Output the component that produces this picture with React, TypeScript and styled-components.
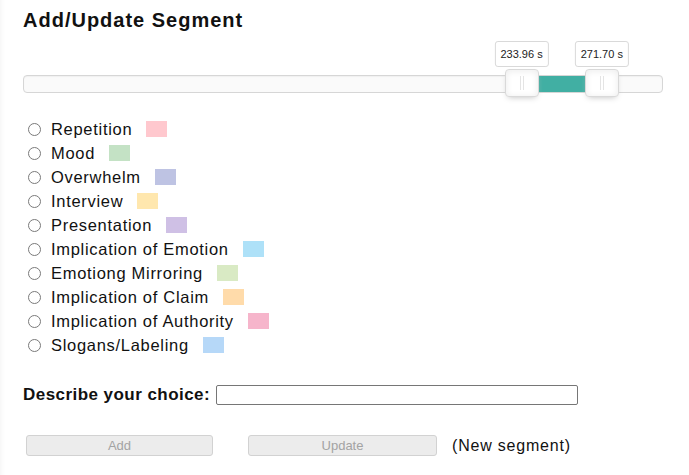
import styled, { createGlobalStyle } from 'styled-components';

const GlobalStyle = createGlobalStyle`
    html, body {
        margin: 0;
        padding: 0;
        background: #ffffff;
    }
    body {
        font-family: "Liberation Sans", Arial, sans-serif;
        color: #111;
    }
`;

const RANGE_MAX = 300;
const START = 233.96;
const END = 271.7;

const segmentTypes = [
    { label: 'Repetition', color: '#FFC8CE' },
    { label: 'Mood', color: '#C4E2C5' },
    { label: 'Overwhelm', color: '#BEC3E3' },
    { label: 'Interview', color: '#FFE7AE' },
    { label: 'Presentation', color: '#CFC0E5' },
    { label: 'Implication of Emotion', color: '#AEE1F8' },
    { label: 'Emotiong Mirroring', color: '#D9EAC4' },
    { label: 'Implication of Claim', color: '#FFDBAA' },
    { label: 'Implication of Authority', color: '#F6B5CB' },
    { label: 'Slogans/Labeling', color: '#B6D8F8' },
];

const Page = styled.div`
    min-height: 475px;
    box-sizing: border-box;
    padding: 8px 26px 0 23px;
    box-shadow: inset 5px 0 5px -4px rgba(0, 0, 0, 0.05);
`;

const Title = styled.h2`
    margin: 0;
    font-size: 20px;
    font-weight: bold;
    letter-spacing: 1px;
    line-height: 24px;
`;

const SliderWrap = styled.div`
    padding-top: 43px;
`;

const Track = styled.div`
    position: relative;
    height: 16px;
    border: 1px solid #d6d6d6;
    border-radius: 4px;
    background: #fafafa;
    box-shadow: inset 0 1px 1px #f0f0f0;
`;

const Connect = styled.div`
    position: absolute;
    top: 0;
    bottom: 0;
    background: #41afa3;
`;

const Handle = styled.div`
    position: absolute;
    top: -7px;
    width: 34px;
    height: 28px;
    margin-left: -17px;
    box-sizing: border-box;
    border: 1px solid #d9d9d9;
    border-radius: 4px;
    background: #fff;
    box-shadow: inset 0 0 1px #fff, inset 0 1px 7px #ebebeb, 0 3px 6px -3px #bbb;

    &::before,
    &::after {
        content: '';
        position: absolute;
        top: 6px;
        width: 1px;
        height: 14px;
        background: #e4e4e4;
    }
    &::before {
        left: 14px;
    }
    &::after {
        left: 17px;
    }
`;

const Tooltip = styled.div`
    position: absolute;
    bottom: calc(100% + 3px);
    left: 50%;
    transform: translateX(-50%);
    box-sizing: border-box;
    height: 26px;
    padding: 0 5px;
    display: flex;
    align-items: center;
    border: 1px solid #d9d9d9;
    border-radius: 3px;
    background: #fff;
    color: #222;
    font-size: 11px;
    white-space: nowrap;
`;

const TypeList = styled.div`
    display: flex;
    flex-direction: column;
    margin-top: 24px;
`;

const TypeRow = styled.label`
    display: flex;
    align-items: center;
    height: 24px;
    font-size: 16.5px;
    letter-spacing: 0.7px;
`;

const Radio = styled.input.attrs({ type: 'radio' })`
    appearance: none;
    width: 13px;
    height: 13px;
    margin: 0 10px 0 5px;
    box-sizing: border-box;
    border: 1px solid #7a7a7a;
    border-radius: 50%;
    background: #fff;
`;

const Swatch = styled.span<{ $color: string }>`
    display: inline-block;
    width: 21px;
    height: 16px;
    margin-left: 14px;
    background: ${props => props.$color};
`;

const DescribeRow = styled.div`
    display: flex;
    align-items: center;
    gap: 6px;
    margin-top: 28px;
`;

const DescribeLabel = styled.span`
    font-size: 17px;
    font-weight: bold;
    letter-spacing: 0.45px;
`;

const TextInput = styled.input`
    width: 362px;
    height: 20px;
    box-sizing: border-box;
    border: 1px solid #767676;
    border-radius: 2px;
    padding: 0 4px;
`;

const ButtonRow = styled.div`
    display: flex;
    align-items: center;
    margin-top: 30px;
    padding-left: 3px;
`;

const ActionButton = styled.button<{ $width: number }>`
    width: ${props => props.$width}px;
    height: 21px;
    margin-right: ${props => (props.$width > 188 ? 15 : 35)}px;
    border: 1px solid #d2d2d2;
    border-radius: 3px;
    background: #ececec;
    color: #a3a3a3;
    font-family: "Liberation Sans", Arial, sans-serif;
    font-size: 13px;
`;

const StatusText = styled.span`
    font-size: 16px;
    letter-spacing: 0.8px;
`;

const pct = (v: number) => `${(v / RANGE_MAX) * 100}%`;

const App = () => {
    return (
        <Page>
            <GlobalStyle />
            <Title>Add/Update Segment</Title>
            <SliderWrap>
                <Track>
                    <Connect style={{ left: pct(START), width: pct(END - START) }} />
                    <Handle style={{ left: pct(START) }}>
                        <Tooltip>{START.toFixed(2)} s</Tooltip>
                    </Handle>
                    <Handle style={{ left: pct(END) }}>
                        <Tooltip>{END.toFixed(2)} s</Tooltip>
                    </Handle>
                </Track>
            </SliderWrap>
            <TypeList>
                {segmentTypes.map(type => (
                    <TypeRow key={type.label}>
                        <Radio name="segmentType" value={type.label} />
                        {type.label}
                        <Swatch $color={type.color} />
                    </TypeRow>
                ))}
            </TypeList>
            <DescribeRow>
                <DescribeLabel>Describe your choice:</DescribeLabel>
                <TextInput type="text" />
            </DescribeRow>
            <ButtonRow>
                <ActionButton $width={187} disabled>
                    Add
                </ActionButton>
                <ActionButton $width={189} disabled>
                    Update
                </ActionButton>
                <StatusText>(New segment)</StatusText>
            </ButtonRow>
        </Page>
    );
};

export default App;
